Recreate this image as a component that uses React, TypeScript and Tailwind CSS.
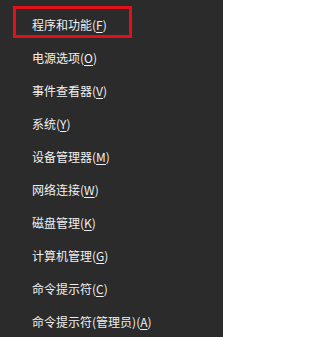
import React from "react";

const items: [string, string][] = [
  ["程序和功能", "F"],
  ["电源选项", "O"],
  ["事件查看器", "V"],
  ["系统", "Y"],
  ["设备管理器", "M"],
  ["网络连接", "W"],
  ["磁盘管理", "K"],
  ["计算机管理", "G"],
  ["命令提示符", "C"],
  ["命令提示符(管理员)", "A"],
];

export default function App() {
  return (
    <div
      className="relative w-[223px] h-[337px] overflow-hidden bg-[#2b2b2b] text-[#f0f0f0] text-[12px] pt-[8px]"
      style={{ fontFamily: '"Microsoft YaHei", "Noto Sans CJK SC", sans-serif' }}
    >
      <div className="flex flex-col">
        {items.map(([label, key]) => (
          <div key={label} className="h-[33px] flex items-center pl-[32px] leading-none whitespace-nowrap">
            <span>
              {label}(<span className="underline underline-offset-[2px]">{key}</span>)
            </span>
          </div>
        ))}
      </div>
      <div className="absolute left-[13px] top-[6px] w-[119px] h-[32px] border-[3px] border-[#e3101a]" />
    </div>
  );
}
